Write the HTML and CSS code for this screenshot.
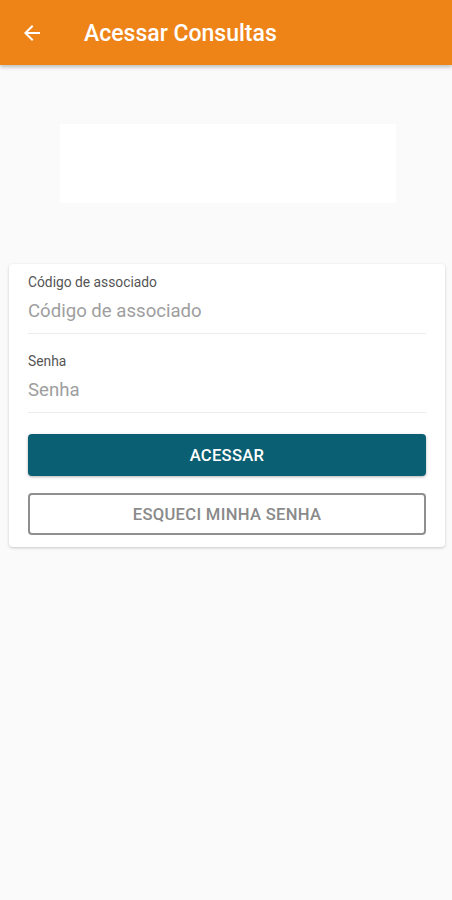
FILE: index.html
```html
<!DOCTYPE html>
<html lang="pt-BR">
<head>
    <meta charset="UTF-8">
    <meta name="viewport" content="width=device-width, initial-scale=1.0">
    <title>Acessar Consultas</title>
    <link rel="stylesheet" href="styles.css">
</head>
<body>
    <header class="app-bar">
        <button class="back-btn" aria-label="Voltar">
            <svg width="24" height="24" viewBox="0 0 24 24">
                <path d="M20 11H7.83l5.59-5.59L12 4l-8 8 8 8 1.41-1.41L7.83 13H20v-2z" fill="#fff"/>
            </svg>
        </button>
        <h1>Acessar Consultas</h1>
    </header>

    <main class="content">
        <div class="logo-box"></div>

        <form class="login-card">
            <div class="field">
                <label>Código de associado</label>
                <input type="text" placeholder="Código de associado">
            </div>
            <div class="field">
                <label>Senha</label>
                <input type="password" placeholder="Senha">
            </div>
            <button type="button" class="btn-primary">ACESSAR</button>
            <button type="button" class="btn-outline">ESQUECI MINHA SENHA</button>
        </form>
    </main>
</body>
</html>
```

FILE: styles.css
```css
* {
    margin: 0;
    padding: 0;
    box-sizing: border-box;
    font-family: Roboto, 'Noto Sans', sans-serif;
}

body {
    background-color: #fafafa;
    width: 452px;
    height: 900px;
}

.app-bar {
    height: 65px;
    background-color: #ee8418;
    display: flex;
    align-items: center;
    padding-left: 20px;
    box-shadow: 0 2px 4px rgba(0, 0, 0, 0.25);
    position: relative;
}

.back-btn {
    background: none;
    border: none;
    width: 24px;
    height: 24px;
    display: flex;
    align-items: center;
    justify-content: center;
}

.app-bar h1 {
    color: #fff;
    font-size: 23px;
    font-weight: 500;
    margin-left: 40px;
    margin-top: 1px;
}

.content {
    padding: 59px 9px 0 7px;
}

.logo-box {
    width: 336px;
    height: 79px;
    margin-left: 53px;
    background-color: #fff;
}

.login-card {
    margin-top: 61px;
    width: 436px;
    margin-left: 2px;
    background-color: #fff;
    border-radius: 4px;
    box-shadow: 0 1px 3px rgba(0, 0, 0, 0.2);
    padding: 9px 19px 12px 19px;
}

.field {
    display: flex;
    flex-direction: column;
    border-bottom: 1px solid #ececec;
    margin-bottom: 18px;
}

.field label {
    font-size: 13.8px;
    color: #555;
    line-height: 18px;
}

.field input {
    border: none;
    outline: none;
    font-size: 18.6px;
    height: 42px;
    padding-bottom: 2px;
    color: #333;
    background: transparent;
}

.field input::placeholder {
    color: #9e9e9e;
}

.btn-primary,
.btn-outline {
    display: block;
    width: 398px;
    height: 42px;
    border-radius: 4px;
    font-size: 16.6px;
    font-weight: 500;
    letter-spacing: 0.3px;
}

.btn-primary {
    margin-top: 21px;
    background-color: #0a5f73;
    color: #fff;
    border: none;
    box-shadow: 0 1px 3px rgba(0, 0, 0, 0.3);
}

.btn-outline {
    margin-top: 17px;
    background-color: #fff;
    color: #8a8a8a;
    border: 2px solid #8f8f8f;
}
```
